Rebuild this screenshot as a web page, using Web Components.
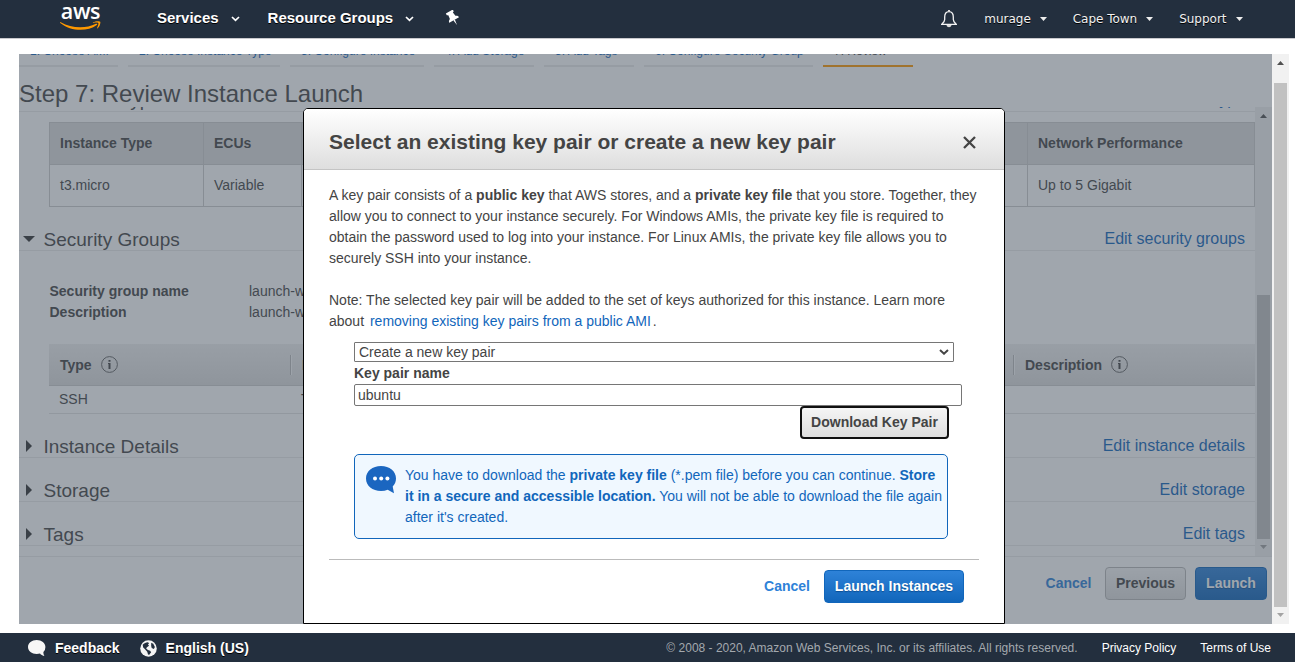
<!DOCTYPE html>
<html lang="en">
<head>
<meta charset="utf-8">
<title>EC2 Management Console</title>
<style>
body { margin: 0; width: 1295px; height: 662px; overflow: hidden; background: #fff; font-family: "Liberation Sans", Arial, sans-serif; font-size: 14px; line-height: 21px; color: #444; }
</style>
</head>
<body>
<ec2-console></ec2-console>
<script>
function define(name, html) {
  const t = document.createElement('template');
  t.innerHTML = html;
  customElements.define(name, class extends HTMLElement {
    constructor() {
      super();
      this.attachShadow({ mode: 'open' }).appendChild(t.content.cloneNode(true));
    }
  });
}

define('nav-item', `
<style>
:host { display: flex; align-items: center; white-space: nowrap; color: #fff; font: bold 15px/17px "Liberation Sans", Arial, sans-serif; letter-spacing: -.02px; text-shadow: 0 1px 0 #000; }
:host([small]) { font: 12px/16px "DejaVu Sans", Verdana, sans-serif; color: #f2f2f2; }
svg { margin: 3px 0 0 12px; }
.caret { display: none; margin: 1px 0 0 9px; }
:host([small]) svg { display: none; }
:host([small]) .caret { display: block; }
</style>
<slot></slot>
<svg width="9" height="6" viewBox="0 0 9 6"><path d="M1 1l3.5 3.4L8 1" fill="none" stroke="#fff" stroke-width="1.7"/></svg>
<svg class="caret" width="7" height="4" viewBox="0 0 7 4"><path d="M0 0h7L3.5 4z" fill="#eee"/></svg>`);

define('aws-nav', `
<style>
:host { display: flex; height: 38px; background: #232f3e; border-bottom: 1px solid #c9c9cd; flex: none; }
.logo { margin-left: 60px; width: 41px; height: 38px; display: flex; flex-direction: column; align-items: center; color: #fff; }
.logo span { font: 600 21.500px/30px "Open Sans", "Noto Sans", sans-serif; height: 30px; margin: -4px 0 -5px; letter-spacing: -.4px; }
.logo svg { flex: none; }
nav { display: flex; flex: 1; padding-left: 56px; height: 35px; align-items: center; }
nav-item[small] { margin-top: 2px; }
.groups { margin-left: 28px; }
.pin { margin: 1px 0 0 31px; }
.bell { margin-left: auto; margin-right: 27px; margin-top: 2px; }
.region { margin-left: 26px; } .support { margin-left: 26px; margin-right: 52.500px; }
</style>
<div class="logo"><span>aws</span>
<svg width="41" height="10" viewBox="0 0 41 10"><path d="M.8 1.2C11 7.2 25 8.300 36 2.800c1-.4 1.800.4.8 1.100C27 11 11 10.500.2 2c-.4-.5 0-1.100.6-.8z" fill="#f90"/><path d="M33 1.400c2.500-1.500 6.500-1.500 7.200-.7.6.9-.3 5-2.500 6.600-.5.300-.8 0-.6-.4.700-1.500 1.700-4.400 1.200-4.900-.6-.6-3.400-.4-5-.1-.5 0-.7-.2-.3-.5z" fill="#f90"/></svg></div>
<nav>
<nav-item>Services</nav-item>
<nav-item class="groups">Resource Groups</nav-item>
<svg class="pin" width="16" height="16" viewBox="0 0 14 14"><g transform="rotate(-30 7 7)" fill="#fff"><path d="M3.500.5h7v1.700l-1.200.6.500 3.600c1.300.5 2.100 1.400 2.100 2.600H2.100c0-1.200.8-2.100 2.100-2.600l.5-3.600-1.200-.6z"/><path d="M6.300 9h1.400L7 14z"/></g></svg>
<svg class="bell" width="16" height="18" viewBox="0 0 16 18"><path d="M8 1.600C5 1.600 3.700 4 3.700 7v2.500C3.700 11.500 2 13 .8 14.300h14.400C14 13 12.300 11.500 12.300 9.500V7C12.300 4 11 1.600 8 1.600z" fill="none" stroke="#f4f4f4" stroke-width="1.300"/><path d="M7 0h2v2H7zM5.500 15h5c-.4 3-4.600 3-5 0z" fill="#ddd"/></svg>
<nav-item small>murage</nav-item>
<nav-item small class="region">Cape Town</nav-item>
<nav-item small class="support">Support</nav-item>
</nav>`);

define('aws-footer', `
<style>
:host { display: flex; align-items: center; height: 29px; background: #232f3e; color: #fff; box-sizing: border-box; flex: none; font: 12px/16px "Liberation Sans", Arial, sans-serif; white-space: nowrap; padding: 1px 24px 0 28px; }
b { font-size: 14px; margin-left: 9px; text-shadow: 0 1px 0 #000; }
.globe { margin-left: 20px; }
.copy { margin-left: auto; color: #a4a9ae; }
.link { margin-left: 24px; }
</style>
<svg width="18" height="16" viewBox="0 0 18 16"><path d="M8.700 0C3.800 0 0 3 0 7s3.800 7 8.700 7c1.200 0 2.300-.2 3.300-.5 1 1.300 2.500 2.200 4.500 2.500-.9-1.200-1.200-2.700-1.100-4.100A6.400 6.400 0 0 0 17.400 7c0-4-3.800-7-8.700-7z" fill="#f7f7f7"/></svg>
<b>Feedback</b>
<svg class="globe" width="17" height="17" viewBox="0 0 16 16"><circle cx="8" cy="8" r="7.800" fill="#f4f4f4"/><path d="M2.500 4.500C4 2.800 5.500 2 7.500 2l1 1-1 1.300 1 1.200-2 1.300L5.800 8 7.500 9.500l2 .5 1 1.500L8.500 14 7.500 13.500 6.800 11 4.500 8.500 3 7z" fill="#232f3e"/><path d="M10.500 2.500l2 1L14 6.500l-1 2-2-1-.5-2z" fill="#232f3e"/></svg>
<b>English (US)</b>
<span class="copy">© 2008 - 2020, Amazon Web Services, Inc. or its affiliates. All rights reserved.</span>
<span class="link">Privacy Policy</span><span class="link">Terms of Use</span>`);

define('scroll-bar', `
<style>
:host { display: flex; flex-direction: column; align-items: center; width: 17px; background: #f1f1f1; box-sizing: border-box; flex: none; }
svg { flex: none; width: 17px; height: 17px; }
.before { height: var(--offset, 0px); flex: none; }
.thumb { width: 13px; height: var(--thumb); background: #c1c1c1; }
.fill { flex: 1; }
</style>
<svg viewBox="0 0 17 17"><path d="M5 11h7L8.500 7z" fill="#505050"/></svg>
<div class="before"></div><div class="thumb"></div><div class="fill"></div>
<svg viewBox="0 0 17 17"><path d="M5 6h7l-3.500 4z" fill="#a3a3a3"/></svg>`);

define('ui-button', `
<style>
:host { display: flex; align-items: center; justify-content: center; box-sizing: border-box; height: 33px; border: 1px solid #b8b8b8; border-radius: 4px; background: linear-gradient(#f6f6f6, #ddd); color: #444; font-weight: bold; white-space: nowrap; padding-bottom: 1px; }
:host([primary]) { background: linear-gradient(#2e82d8, #1166bb); border-color: #1166bb; color: #fff; text-shadow: 0 1px 1px #0d4f94; }
:host([focused]) { border: 2px solid #101010; background: linear-gradient(#f5f5f5, #dedede); }
:host([plain]) { border: 0; background: none; color: #2e82d8; }
</style><slot></slot>`);

define('wizard-tab', `
<style>
:host { display: block; box-sizing: border-box; flex: none; width: var(--w, auto); padding: 0 10px 6px 11px; border-bottom: 2px solid #eaeaea; color: #1166bb; font-size: 12px; line-height: 16px; white-space: nowrap; }
:host([active]) { color: #444; border-color: #ff9900; }
</style><slot></slot>`);

define('review-heading', `
<style>
:host { display: flex; justify-content: space-between; align-items: flex-end; box-sizing: border-box; height: 44px; border-bottom: 1px solid #eaeaea; padding-right: 10px; flex: none; }
.title { display: flex; align-items: center; font-size: 19px; line-height: 22px; margin-bottom: -1px; }
svg { width: 12px; height: 12px; margin: 0 8.500px 3px 4px; fill: #333; }
.down { display: none; }
:host([open]) .down { display: block; } :host([open]) .right { display: none; }
.link { color: #1166bb; font-size: 16px; line-height: 18px; padding-bottom: 2px; }
</style>
<div class="title"><svg class="right" viewBox="0 0 12 12"><path d="M3 0v12l6-6z"/></svg><svg class="down" viewBox="0 0 12 12"><path d="M0 3h12L6 9z"/></svg><slot></slot></div>
<div class="link"><slot name="edit"></slot></div>`);

define('info-icon', `
<style>:host { display: inline-flex; width: 17px; height: 17px; } svg { display: block; }</style>
<svg width="17" height="17" viewBox="0 0 17 17"><circle cx="8.500" cy="8.500" r="7.900" fill="none" stroke="#666" stroke-width="1"/><path d="M7.500 4h2v1.800h-2zM7 7h2.500v6h-2V8H7z" fill="#444"/></svg>`);

define('instance-table', `
<style>
:host { display: grid; grid-template-columns: 155px 98px 726px 227px; height: 85px; grid-template-rows: 43px 42px; box-sizing: border-box; width: 1206px; }
div { border-right: 1px solid #ccc; border-bottom: 1px solid #ccc; padding: 0 10px; line-height: 41px; }
.h { background: #ddd; font-weight: bold; border-top: 1px solid #ccc; }
.f { border-left: 1px solid #ccc; }
</style>
<div class="h f">Instance Type</div><div class="h">ECUs</div><div class="h"></div><div class="h">Network Performance</div>
<div class="f">t3.micro</div><div>Variable</div><div></div><div>Up to 5 Gigabit</div>`);

define('rules-table', `
<style>
:host { display: block; width: 1206px; }
.row { display: grid; grid-template-columns: 241px 723px 242px; height: 27px; border-bottom: 1px solid #e2e2e2; line-height: 27px; }
.row span { padding-left: 10px; }
.head { height: 41px; border-bottom: 1px solid #ccc; background: linear-gradient(#f0f0f0, #dcdcdc); font-weight: bold; align-items: center; line-height: 20px; }
.head span { display: flex; gap: 9px; padding-left: 11px; align-items: center; height: 20px; }
.head span + span { border-left: 1px solid #bbb; box-shadow: inset 1px 0 #f8f8f8; }
.row:not(.head) span + span { padding-left: 11px; }
</style>
<div class="row head"><span>Type <info-icon></info-icon></span><span>Protocol</span><span>Description <info-icon></info-icon></span></div>
<div class="row"><span>SSH</span><span>TCP</span><span></span></div>`);

define('review-page', `
<style>
:host { display: flex; flex-direction: column; width: 1253px; height: 570px; position: relative; overflow: hidden; background: #fff; }
.tabs { height: 13px; display: flex; gap: 10px; align-items: flex-end; overflow: hidden; flex: none; }
h1 { margin: 0; font-weight: normal; font-size: 24px; line-height: 28px; height: 40px; padding-top: 13px; box-sizing: border-box; flex: none; white-space: nowrap; }
.mid { display: flex; height: 449px; flex: none; }
.body { width: 1236px; height: 449px; overflow: hidden; display: flex; flex-direction: column; }
.prev { height: 5px; display: flex; align-items: flex-end; overflow: hidden; box-sizing: border-box; flex: none; border-bottom: 1px solid #eaeaea; }
.prev span { font-size: 19px; line-height: 22px; margin-left: 24px; flex: 1; }
.prev a { font-size: 16px; line-height: 18px; margin: 0 10px 2px 0; color: #1166bb; }
instance-table { margin: 10px 0 0 30px; }
rules-table { margin: 21px 0 0 30px; }
dl { display: grid; grid-template-columns: 199.500px 1fr; margin: 30px 0 0 30.500px; }
dt { font-weight: bold; } dd { margin: 0; }
.actions { display: flex; justify-content: flex-end; padding: 10px 5px 0 0; border-top: 1px solid #eaeaea; gap: 9px; }
.shade { position: absolute; inset: 0; background: rgba(65,77,92,.5); }
</style>
<div class="tabs"><wizard-tab style="--w:99px">1. Choose AMI</wizard-tab><wizard-tab style="--w:152px">2. Choose Instance Type</wizard-tab><wizard-tab style="--w:134px">3. Configure Instance</wizard-tab><wizard-tab style="--w:100px">4. Add Storage</wizard-tab><wizard-tab style="--w:90px">5. Add Tags</wizard-tab><wizard-tab style="--w:169px">6. Configure Security Group</wizard-tab><wizard-tab active style="--w:90px">7. Review</wizard-tab></div>
<h1>Step 7: Review Instance Launch</h1>
<div class="mid"><div class="body">
<div class="prev"><span>Instance Type</span><a>Edit instance type</a></div>
<instance-table></instance-table>
<review-heading open>Security Groups<span slot="edit">Edit security groups</span></review-heading>
<dl><dt>Security group name</dt><dd>launch-wizard-1</dd><dt>Description</dt><dd>launch-wizard-1</dd></dl>
<rules-table></rules-table>
<review-heading>Instance Details<span slot="edit">Edit instance details</span></review-heading>
<review-heading>Storage<span slot="edit">Edit storage</span></review-heading>
<review-heading>Tags<span slot="edit">Edit tags</span></review-heading>
</div><scroll-bar style="--offset:171px;--thumb:244px"></scroll-bar></div>
<div class="actions"><ui-button plain style="width:55px">Cancel</ui-button><ui-button style="width:81px">Previous</ui-button><ui-button primary style="width:72px">Launch</ui-button></div>
<div class="shade"></div>`);

define('info-note', `
<style>
:host { display: flex; box-sizing: border-box; width: 594px; height: 85px; border: 1px solid #1166bb; border-radius: 5px; background: #f0f8ff; color: #1166bb; padding: 10px 0 0 11px; white-space: nowrap; }
svg { margin: 1px 9px 0 0; flex: none; }
</style>
<svg width="30" height="28" viewBox="0 0 30 28"><path d="M15 0C6.500 0 0 5.200 0 12.500S6.500 25 15 25c2.500 0 4.700-.4 6.700-1.200L28 27.300l-1.300-6.800C28.800 18.400 30 15.700 30 12.500 30 5.200 23.500 0 15 0z" fill="#1b66c0"/><circle cx="9" cy="12.500" r="2" fill="#fff"/><circle cx="15.200" cy="12.500" r="2" fill="#fff"/><circle cx="21.400" cy="12.500" r="2" fill="#fff"/></svg>
<div><slot></slot></div>`);

define('key-dialog', `
<style>
:host { display: flex; flex-direction: column; box-sizing: border-box; width: 702px; height: 516px; border: 1px solid #000; border-radius: 5px 5px 0 0; background: #fff; overflow: hidden; }
header { display: flex; justify-content: space-between; align-items: center; box-sizing: border-box; height: 61px; flex: none; padding: 5px 28px 0 25px; background: linear-gradient(#fff, #dedede); border-bottom: 1px solid #c4c4c4; }
h2 { margin: 0; font-size: 21px; line-height: 24px; white-space: nowrap; }
header svg { margin-top: 2px; }
.text { margin: 15px 0 0 25px; white-space: nowrap; }
p { margin: 0 0 21px; } p + p { margin: 0; }
a { color: #1166bb; margin: 0 2px; }
form { display: flex; flex-direction: column; margin: 10px 0 0 50px; }
.select { display: flex; align-items: center; justify-content: space-between; box-sizing: border-box; width: 600px; height: 20px; border: 1px solid #767676; padding: 0 4px; border-radius: 1px; }
label { font-weight: bold; line-height: 22px; height: 22px; }
.input { box-sizing: border-box; width: 608px; height: 22px; border: 1px solid #767676; border-radius: 2px; padding: 0 3px; line-height: 20px; }
ui-button[focused] { width: 149px; margin-left: 446px; }
info-note { margin-top: 15px; }
footer { display: flex; justify-content: flex-end; margin: 20px 25px 0; padding: 10px 15px 0 0; border-top: 1px solid #bbb; gap: 10px; }
</style>
<header><h2>Select an existing key pair or create a new key pair</h2>
<svg width="13" height="13" viewBox="0 0 13 13"><path d="M1 1l11 11M12 1L1 12" stroke="#444" stroke-width="2.300"/></svg></header>
<div class="text"><p>A key pair consists of a <b>public key</b> that AWS stores, and a <b>private key file</b> that you store. Together, they<br>allow you to connect to your instance securely. For Windows AMIs, the private key file is required to<br>obtain the password used to log into your instance. For Linux AMIs, the private key file allows you to<br>securely SSH into your instance.</p><p>Note: The selected key pair will be added to the set of keys authorized for this instance. Learn more<br>about <a>removing existing key pairs from a public AMI</a>.</p></div>
<form>
<div class="select" role="combobox">Create a new key pair<svg width="10" height="6" viewBox="0 0 10 6"><path d="M1 1l4 3.700L9 1" fill="none" stroke="#444" stroke-width="2"/></svg></div>
<label>Key pair name</label>
<div class="input" role="textbox">ubuntu</div>
<ui-button focused>Download Key Pair</ui-button>
<info-note>You have to download the <b>private key file</b> (*.pem file) before you can continue. <b>Store<br>it in a secure and accessible location.</b> You will not be able to download the file again<br>after it's created.</info-note>
</form>
<footer><ui-button plain style="width:54px">Cancel</ui-button><ui-button primary style="width:140px">Launch Instances</ui-button></footer>`);

define('ec2-console', `
<style>
:host { display: flex; flex-direction: column; width: 1295px; height: 662px; }
main { display: flex; position: relative; height: 570px; margin: 15px 0 9px 19px; flex: none; }
key-dialog { position: absolute; left: 284px; top: 54px; }
</style>
<aws-nav></aws-nav>
<main><review-page></review-page><scroll-bar style="--offset:12px;--thumb:524px"></scroll-bar><key-dialog></key-dialog></main>
<aws-footer></aws-footer>`);
</script>
</body>
</html>
